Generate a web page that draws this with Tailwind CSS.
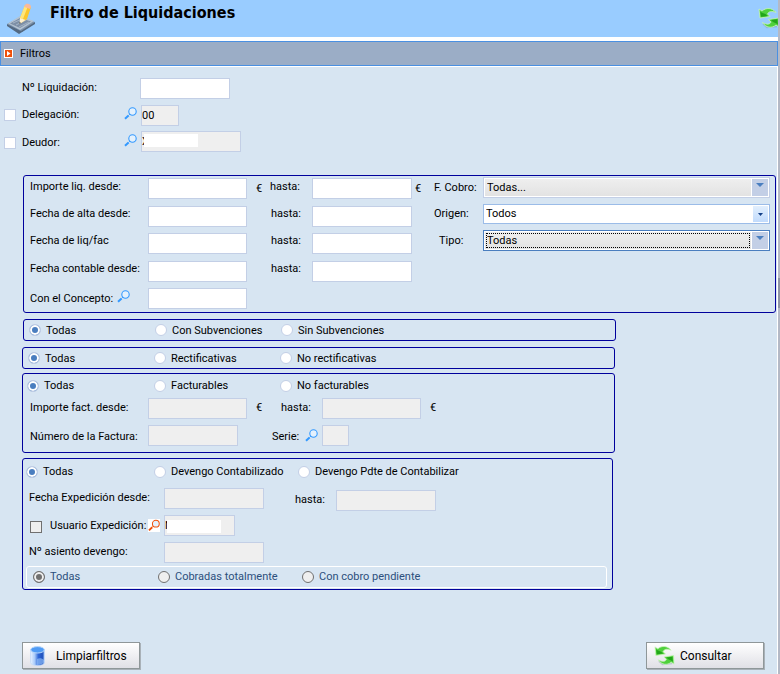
<!DOCTYPE html>
<html lang="es">
<head>
  <meta charset="UTF-8">
  <meta name="viewport" content="width=device-width, initial-scale=1.0">
  <title>Filtro de Liquidaciones</title>
  <script src="https://cdn.jsdelivr.net/npm/@tailwindcss/browser@4"></script>
</head>
<body class="bg-[#d7e5f2] font-['Roboto','Noto_Sans',sans-serif] text-[11px] leading-4 text-black">
  <!-- Shared icons -->
  <svg class="absolute h-0 w-0">
    <defs>
      <linearGradient id="drum" x1="0" x2="1" y1="0" y2="0">
        <stop offset="0" stop-color="#e8f2ff"/>
        <stop offset=".3" stop-color="#a9cbfa"/>
        <stop offset=".55" stop-color="#2f68d8"/>
        <stop offset=".85" stop-color="#1f50bd"/>
        <stop offset="1" stop-color="#8fb8f2"/>
      </linearGradient>
    </defs>
    <symbol id="icon-search" viewBox="0 0 13 13">
      <circle cx="8.5" cy="4.5" r="3.7" fill="#e4f1fd" stroke="currentColor" stroke-width="1.1"/>
      <path d="M5.8 7.2L4.6 8.4" stroke="currentColor" stroke-width="1"/>
      <path d="M4.6 8.4L1 11.8" stroke="currentColor" stroke-width="2"/>
    </symbol>
    <symbol id="icon-refresh" viewBox="0 0 22 22">
      <path d="M19 19.500L9 20.500L5 17" fill="none" stroke="#6d8a9d" stroke-opacity=".35" stroke-width="1.500"/>
      <path d="M1 2L4 4C8 .5 14 .5 18 5.500C13.500 3.500 10.500 4.500 9.500 7L12 9.500L2 11Z" fill="#4fd03c" stroke="#c9f5b8" stroke-width=".8"/>
      <path d="M2.300 4.500L3.600 5.500L7.500 7L9.500 9L3 9.800Z" fill="#22a51a"/>
      <path d="M21 20L18 18C14 21.500 8 21 4.500 15.500C9 18 12 17.500 13 15L10.500 12.500L20.500 11Z" fill="#4fd03c" stroke="#c9f5b8" stroke-width=".8"/>
      <path d="M19.800 17.500L18.400 16.500L15 15L13 13L19.300 12.200Z" fill="#22a51a"/>
    </symbol>
  </svg>

  <div class="flex min-h-screen">
    <div class="flex min-w-0 flex-1 flex-col">
      <!-- Header -->
      <header class="flex h-[41px] items-start justify-between overflow-hidden border-b-4 border-white bg-[#99ccff]">
        <div class="flex">
          <svg class="ml-[7px] mt-[3px] h-[32px] w-[29px]" viewBox="0 0 29 32">
            <path d="M0 21L13 14L28 19L15 29Z" fill="#7e93ab"/>
            <path d="M0 21V23L12 31L28 21V19L14 28Z" fill="#546981"/>
            <path d="M1 20.500L13 13L27 18L13 27Z" fill="#b4c3d2"/>
            <path d="M3 20.500L13 15L24 18.500L13 25Z" fill="#7d8fa6"/>
            <path d="M6 20L15 16M9 22L19 17M12 24L22 19" stroke="#a4b4c5" stroke-width="1"/>
            <path d="M18 2L24 4L20 16L14 20L13 15Z" fill="#fcc62c"/>
            <path d="M18 2L21 3L16 16L13 15Z" fill="#ffe67d"/>
            <path d="M18 2C19 0 24 .5 24 4L23 6L17.500 4Z" fill="#f9b99b"/>
            <path d="M13 15L12.500 21L18.500 17Z" fill="#fff1cf"/>
            <path d="M12.500 21V19L14 20Z" fill="#333"/>
          </svg>
          <h1 class="ml-[14px] mt-px font-['DejaVu_Sans_Condensed','DejaVu_Sans',sans-serif] text-[16px] leading-[24px] font-bold">Filtro de Liquidaciones</h1>
        </div>
        <svg class="-mr-[2px] mt-[7px] h-[22px] w-[22px]"><use href="#icon-refresh"/></svg>
      </header>

      <div class="flex h-[25px] items-center border border-[#4a90e2] bg-[#9badc6] pl-[3px]">
        <svg class="h-[9px] w-[9px]" viewBox="0 0 9 9">
          <path d="M0 0H9V9H0Z" fill="#fff"/>
          <path d="M1 1H8V8H1Z" fill="#f0500a"/>
          <path d="M3 2L6.500 4.500L3 7Z" fill="#fff"/>
        </svg>
        <h2 class="ml-[7px]">Filtros</h2>
      </div>

      <form class="flex flex-1 flex-col border-r border-t border-white bg-[#d7e5f2]">
        <!-- General data -->
        <div class="mt-[11px] grid grid-cols-[22px_102px_16px_1fr] grid-rows-[27px_26px_21px] items-start">
          <label for="liquidacion" class="col-start-2 leading-[20px]">Nº Liquidación:</label>
          <input id="liquidacion" type="text" class="col-start-4 h-[21px] w-[90px] border border-[#c3cfe6] bg-white px-1">

          <input type="checkbox" aria-label="Filtrar por delegación" class="ml-[4px] mt-[4px] h-[12px] w-[12px] appearance-none border border-[#c3cfe6] bg-white">
          <label for="delegacion" class="leading-[20px]">Delegación:</label>
          <button type="button" aria-label="Buscar delegación" class="mt-[2px] justify-self-start text-[#3399ff]"><svg class="h-[13px] w-[13px]"><use href="#icon-search"/></svg></button>
          <input id="delegacion" type="text" value="00" class="ml-px h-[21px] w-[38px] border border-[#c3cfe6] bg-[#efefef]">

          <input type="checkbox" aria-label="Filtrar por deudor" class="ml-[4px] mt-[6px] h-[12px] w-[12px] appearance-none border border-[#c3cfe6] bg-white">
          <label for="deudor" class="leading-[24px]">Deudor:</label>
          <button type="button" aria-label="Buscar deudor" class="mt-[3px] justify-self-start text-[#3399ff]"><svg class="h-[13px] w-[13px]"><use href="#icon-search"/></svg></button>
          <div class="relative ml-px w-[100px]">
            <input id="deudor" type="text" value="X" class="block h-[21px] w-full border border-[#c3cfe6] bg-[#efefef]">
            <span class="absolute left-[3px] top-[3px] h-[13px] w-[54px] bg-white"></span>
          </div>
        </div>

        <!-- Amounts and dates -->
        <section class="ml-[23px] mr-px mt-[23px] flex h-[138px] rounded-[3px] border border-[#00009c] pl-[6px] pr-[5px] pt-[2px]">
          <div class="grid grid-cols-[118px_99px_23px_42px_100px_22px] grid-rows-[28px_27px_28px_27px_21px] items-start">
            <label for="importeDesde" class="leading-[18px]">Importe liq. desde:</label>
            <input id="importeDesde" type="text" class="h-[21px] border border-[#c3cfe6] bg-white px-1">
            <span class="pl-[9px] leading-[22px]">€</span>
            <label for="importeHasta" class="leading-[18px]">hasta:</label>
            <input id="importeHasta" type="text" class="h-[21px] border border-[#c3cfe6] bg-white px-1">
            <span class="pl-[3px] leading-[22px]">€</span>

            <label for="altaDesde">Fecha de alta desde:</label>
            <input id="altaDesde" type="text" class="h-[21px] border border-[#c3cfe6] bg-white px-1">
            <label for="altaHasta" class="col-start-4 pl-px">hasta:</label>
            <input id="altaHasta" type="text" class="h-[21px] border border-[#c3cfe6] bg-white px-1">

            <label for="liqDesde" class="col-start-1">Fecha de liq/fac</label>
            <input id="liqDesde" type="text" class="h-[21px] border border-[#c3cfe6] bg-white px-1">
            <label for="liqHasta" class="col-start-4 pl-px">hasta:</label>
            <input id="liqHasta" type="text" class="h-[21px] border border-[#c3cfe6] bg-white px-1">

            <label for="contableDesde" class="col-start-1">Fecha contable desde:</label>
            <input id="contableDesde" type="text" class="h-[21px] border border-[#c3cfe6] bg-white px-1">
            <label for="contableHasta" class="col-start-4 pl-px">hasta:</label>
            <input id="contableHasta" type="text" class="h-[21px] border border-[#c3cfe6] bg-white px-1">

            <div class="col-start-1 flex gap-[4px]">
              <label for="concepto" class="leading-[21px]">Con el Concepto:</label>
              <button type="button" aria-label="Buscar concepto" class="mt-[2px] self-start text-[#3399ff]"><svg class="h-[13px] w-[13px]"><use href="#icon-search"/></svg></button>
            </div>
            <input id="concepto" type="text" class="h-[21px] border border-[#c3cfe6] bg-white px-1">
          </div>

          <div class="-mt-px grid flex-1 grid-cols-[49px_1fr] grid-rows-[27px_26px_21px] items-start">
            <label for="cobro" class="leading-[21px]">F. Cobro:</label>
            <div class="relative">
              <select id="cobro" class="block h-[21px] w-full appearance-none border border-[#c3cfe6] bg-linear-to-b from-[#efefef] to-[#e2e2e2] pl-[3px] shadow-[inset_0_0_0_1px_white]">
                <option>Todas...</option>
              </select>
              <span class="pointer-events-none absolute right-[2px] top-[2px] flex h-[17px] w-[17px] justify-center border-l border-white bg-[#c3cfe6] pt-[4px]">
                <svg class="h-[4px] w-[8px]" viewBox="0 0 8 4"><path d="M0 0H8L4 4Z" fill="#4a7ebf"/></svg>
              </span>
            </div>
            <label for="origen" class="leading-[20px]">Origen:</label>
            <div class="relative">
              <select id="origen" class="block h-[20px] w-full appearance-none border border-[#9bbce8] bg-white pl-[2px]">
                <option>Todos</option>
              </select>
              <span class="pointer-events-none absolute right-[2px] top-[2px] flex h-[16px] w-[15px] items-center justify-center bg-linear-to-b from-[#e2effd] to-[#c1dbfc]">
                <svg class="h-[3px] w-[5px]" viewBox="0 0 5 3"><path d="M0 0H5L2.500 3Z" fill="#123f87"/></svg>
              </span>
            </div>
            <label for="tipo" class="pl-[5px] leading-[21px]">Tipo:</label>
            <div class="relative">
              <select id="tipo" class="block h-[21px] w-full appearance-none border border-[#4a7ebf] bg-linear-to-b from-[#efefef] to-[#e2e2e2] pl-[3px] shadow-[inset_0_0_0_1px_white]">
                <option>Todas</option>
              </select>
              <span class="pointer-events-none absolute inset-y-[3px] left-[3px] right-[20px] border border-dotted border-black"></span>
              <span class="pointer-events-none absolute right-[2px] top-[2px] flex h-[17px] w-[17px] justify-center border-l border-white bg-[#c3cfe6] pt-[4px]">
                <svg class="h-[4px] w-[8px]" viewBox="0 0 8 4"><path d="M0 0H8L4 4Z" fill="#4a7ebf"/></svg>
              </span>
            </div>
          </div>
        </section>

        <!-- Subsidies -->
        <section class="ml-[23px] mt-[6px] grid h-[22px] max-w-[593px] grid-cols-[126px_126px_1fr] items-center rounded-[3px] border border-[#00009c] pl-[5px]">
          <label class="flex items-center gap-[5px]"><input type="radio" name="subvencion" checked class="h-[12px] w-[12px] appearance-none rounded-full border border-[#c3cfe6] bg-white checked:bg-[#4a7ebf] checked:shadow-[inset_0_0_0_2px_white]"><span class="pt-[2px]">Todas</span></label>
          <label class="flex items-center gap-[5px]"><input type="radio" name="subvencion" class="h-[12px] w-[12px] appearance-none rounded-full border border-[#c3cfe6] bg-white checked:bg-[#4a7ebf] checked:shadow-[inset_0_0_0_2px_white]"><span class="pt-[2px]">Con Subvenciones</span></label>
          <label class="flex items-center gap-[5px]"><input type="radio" name="subvencion" class="h-[12px] w-[12px] appearance-none rounded-full border border-[#c3cfe6] bg-white checked:bg-[#4a7ebf] checked:shadow-[inset_0_0_0_2px_white]"><span class="pt-[2px]">Sin Subvenciones</span></label>
        </section>

        <!-- Corrections -->
        <section class="ml-[22px] mt-[6px] grid h-[22px] max-w-[593px] grid-cols-[126px_126px_1fr] items-center rounded-[3px] border border-[#00009c] pl-[5px]">
          <label class="flex items-center gap-[5px]"><input type="radio" name="rectificativa" checked class="h-[12px] w-[12px] appearance-none rounded-full border border-[#c3cfe6] bg-white checked:bg-[#4a7ebf] checked:shadow-[inset_0_0_0_2px_white]"><span class="pt-[2px]">Todas</span></label>
          <label class="flex items-center gap-[5px]"><input type="radio" name="rectificativa" class="h-[12px] w-[12px] appearance-none rounded-full border border-[#c3cfe6] bg-white checked:bg-[#4a7ebf] checked:shadow-[inset_0_0_0_2px_white]"><span class="pt-[2px]">Rectificativas</span></label>
          <label class="flex items-center gap-[5px]"><input type="radio" name="rectificativa" class="h-[12px] w-[12px] appearance-none rounded-full border border-[#c3cfe6] bg-white checked:bg-[#4a7ebf] checked:shadow-[inset_0_0_0_2px_white]"><span class="pt-[2px]">No rectificativas</span></label>
        </section>

        <!-- Invoices -->
        <section class="ml-[22px] mt-[4px] h-[80px] max-w-[593px] rounded-[3px] border border-[#00009c] pl-[4px]">
          <div class="grid h-[24px] grid-cols-[127px_126px_1fr] items-center">
            <label class="flex items-center gap-[5px]"><input type="radio" name="facturable" checked class="h-[12px] w-[12px] appearance-none rounded-full border border-[#c3cfe6] bg-white checked:bg-[#4a7ebf] checked:shadow-[inset_0_0_0_2px_white]">Todas</label>
            <label class="flex items-center gap-[5px]"><input type="radio" name="facturable" class="h-[12px] w-[12px] appearance-none rounded-full border border-[#c3cfe6] bg-white checked:bg-[#4a7ebf] checked:shadow-[inset_0_0_0_2px_white]">Facturables</label>
            <label class="flex items-center gap-[5px]"><input type="radio" name="facturable" class="h-[12px] w-[12px] appearance-none rounded-full border border-[#c3cfe6] bg-white checked:bg-[#4a7ebf] checked:shadow-[inset_0_0_0_2px_white]">No facturables</label>
          </div>
          <div class="grid grid-cols-[118px_99px_25px_50px_99px_1fr] grid-rows-[27px_21px] items-start pl-[3px]">
            <label for="factDesde" class="leading-[20px]">Importe fact. desde:</label>
            <input id="factDesde" type="text" class="h-[21px] border border-[#c3cfe6] bg-[#efefef] px-1">
            <span class="pl-[9px] leading-[20px]">€</span>
            <label for="factHasta" class="pl-[9px] leading-[20px]">hasta:</label>
            <input id="factHasta" type="text" class="h-[21px] border border-[#c3cfe6] bg-[#efefef] px-1">
            <span class="pl-[9px] leading-[20px]">€</span>

            <label for="numFactura" class="leading-[24px]">Número de la Factura:</label>
            <input id="numFactura" type="text" class="h-[21px] w-[90px] border border-[#c3cfe6] bg-[#efefef] px-1">
            <div class="col-start-4 flex gap-[6px]">
              <label for="serie" class="leading-[24px]">Serie:</label>
              <button type="button" aria-label="Buscar serie" class="mt-[4px] self-start text-[#3399ff]"><svg class="h-[13px] w-[13px]"><use href="#icon-search"/></svg></button>
            </div>
            <input id="serie" type="text" class="h-[21px] w-[27px] border border-[#c3cfe6] bg-[#efefef] px-1">
          </div>
        </section>

        <!-- Accruals -->
        <section class="ml-[22px] mt-[5px] h-[132px] max-w-[591px] rounded-[3px] border border-[#00009c] pl-[3px] pr-[5px]">
          <div class="grid h-[26px] grid-cols-[128px_144px_1fr] items-center">
            <label class="flex items-center gap-[5px]"><input type="radio" name="devengo" checked class="h-[12px] w-[12px] appearance-none rounded-full border border-[#c3cfe6] bg-white checked:bg-[#4a7ebf] checked:shadow-[inset_0_0_0_2px_white]">Todas</label>
            <label class="flex items-center gap-[5px]"><input type="radio" name="devengo" class="h-[12px] w-[12px] appearance-none rounded-full border border-[#c3cfe6] bg-white checked:bg-[#4a7ebf] checked:shadow-[inset_0_0_0_2px_white]">Devengo Contabilizado</label>
            <label class="flex items-center gap-[5px]"><input type="radio" name="devengo" class="h-[12px] w-[12px] appearance-none rounded-full border border-[#c3cfe6] bg-white checked:bg-[#4a7ebf] checked:shadow-[inset_0_0_0_2px_white]">Devengo Pdte de Contabilizar</label>
          </div>
          <div class="mt-[3px] grid grid-cols-[135px_131px_41px_1fr] grid-rows-[27px_27px_24px] items-start pl-[3px]">
            <label for="expDesde" class="leading-[20px]">Fecha Expedición desde:</label>
            <input id="expDesde" type="text" class="h-[21px] w-[100px] border border-[#c3cfe6] bg-[#efefef] px-1">
            <label for="expHasta" class="leading-[24px]">hasta:</label>
            <input id="expHasta" type="text" class="mt-[2px] h-[21px] w-[100px] border border-[#c3cfe6] bg-[#efefef] px-1">

            <div class="flex h-[21px] items-center">
              <input id="usuarioCheck" aria-label="Filtrar por usuario" type="checkbox" class="ml-px mt-[2px] h-[12px] w-[12px] shrink-0 appearance-none border border-[#707070] bg-[#efefef]">
              <label for="usuario" class="ml-[8px] w-[98px] whitespace-nowrap leading-[24px]">Usuario Expedición:</label>
              <button type="button" aria-label="Buscar usuario" class="bg-white text-[#f0500a]"><svg class="h-[13px] w-[12px]"><use href="#icon-search"/></svg></button>
            </div>
            <div class="relative w-[71px]">
              <input id="usuario" type="text" value="N" class="block h-[21px] w-full border border-[#c3cfe6] bg-[#efefef]">
              <span class="absolute left-[3px] top-[5px] h-[13px] w-[54px] bg-white"></span>
            </div>

            <label for="asiento" class="col-start-1 leading-[20px]">Nº asiento devengo:</label>
            <input id="asiento" type="text" class="h-[21px] w-[100px] border border-[#c3cfe6] bg-[#efefef] px-1">
          </div>
          <div class="grid h-[22px] grid-cols-[125px_144px_1fr] items-center rounded-[3px] border border-white pl-[6px] text-[#2c4f7c]">
            <label class="flex items-center gap-[5px]"><input type="radio" name="cobrada" checked class="h-[12px] w-[12px] appearance-none rounded-full border border-[#707070] bg-[#efefef] checked:bg-[#707070] checked:shadow-[inset_0_0_0_2px_#efefef]">Todas</label>
            <label class="flex items-center gap-[5px]"><input type="radio" name="cobrada" class="h-[12px] w-[12px] appearance-none rounded-full border border-[#707070] bg-[#efefef] checked:bg-[#707070] checked:shadow-[inset_0_0_0_2px_#efefef]">Cobradas totalmente</label>
            <label class="flex items-center gap-[5px]"><input type="radio" name="cobrada" class="h-[12px] w-[12px] appearance-none rounded-full border border-[#707070] bg-[#efefef] checked:bg-[#707070] checked:shadow-[inset_0_0_0_2px_#efefef]">Con cobro pendiente</label>
          </div>
        </section>

        <!-- Actions -->
        <div class="mt-[52px] flex justify-between pb-[4px] pl-[22px] pr-[13px] text-[12px]">
          <button type="reset" class="flex h-[27px] w-[118px] items-center border border-[#8f9799] bg-linear-to-b from-white to-[#e0e0e6] pl-[7px] shadow-[1px_1px_0_#a9b1b8]">
            <svg class="h-[20px] w-[15px]" viewBox="0 0 15 20">
              <path d="M.5 3.500V16.500C.5 20.500 14.500 20.500 14.500 16.500V3.500Z" fill="url(#drum)" stroke="#c3d8f6" stroke-width=".8"/>
              <path d="M7 13C9 12 12 12 14 14V16.500C13 18 10 19 7 19Z" fill="#9cc8fb" fill-opacity=".6"/>
              <ellipse cx="7.500" cy="3.800" rx="6.800" ry="3.200" fill="#4f9bf5" stroke="#b9d8fb"/>
            </svg>
            <span class="ml-[11px]">Limpiarfiltros</span>
          </button>
          <button type="submit" class="flex h-[27px] w-[118px] items-center border border-[#8f9799] bg-linear-to-b from-white to-[#e0e0e6] pl-[7px] shadow-[1px_1px_0_#a9b1b8]">
            <svg class="h-[21px] w-[21px]"><use href="#icon-refresh"/></svg>
            <span class="ml-[5px]">Consultar</span>
          </button>
        </div>
      </form>
    </div>

    <!-- Splitter -->
    <div class="flex w-[2px] items-start bg-[#b4b9c6] pt-[278px]">
      <div class="h-[30px] w-full bg-[#8d94a6]"></div>
    </div>
  </div>
</body>
</html>
